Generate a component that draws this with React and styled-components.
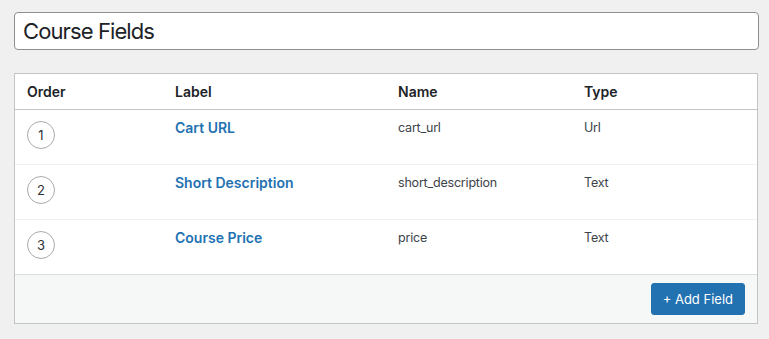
import styled, { createGlobalStyle } from "styled-components";

const GlobalStyle = createGlobalStyle`
  html, body {
    margin: 0;
    background: #f0f0f1;
    font-family: Inter, "Liberation Sans", sans-serif;
    color: #3c434a;
  }
`;

const Page = styled.div`
  padding: 12px 10px 0 14px;
  display: flex;
  flex-direction: column;
  gap: 23px;
`;

const TitleInput = styled.input`
  box-sizing: border-box;
  width: 100%;
  height: 38px;
  padding: 0 8px;
  border: 1px solid #8c8f94;
  border-radius: 4px;
  background: #fff;
  font-family: inherit;
  font-size: 22px;
  letter-spacing: -0.9px;
  color: #1d2327;
  outline: none;
`;

const Panel = styled.div`
  width: 742px;
  border: 1px solid #c3c4c7;
  background: #fff;
`;

const cols = "148px 223px 186px 1fr";

const HeadRow = styled.div`
  display: grid;
  grid-template-columns: ${cols};
  height: 35px;
  align-items: center;
  border-bottom: 1px solid #c3c4c7;
`;

const HeadCell = styled.div`
  padding-left: 12px;
  font-size: 14px;
  font-weight: 600;
  color: #1d2327;
`;

const Row = styled.div`
  display: grid;
  grid-template-columns: ${cols};
  height: 54px;
  border-bottom: 1px solid ${(p) => (p.$last ? "#dcdcde" : "#f0f0f1")};
`;

const Cell = styled.div`
  padding: 8px 0 0 12px;
  font-size: 12.5px;
  letter-spacing: -0.2px;
  line-height: 20px;
`;

const OrderBadge = styled.span`
  display: flex;
  align-items: center;
  justify-content: center;
  box-sizing: border-box;
  width: 28px;
  height: 28px;
  margin-top: 3px;
  border: 1px solid #a7aaad;
  border-radius: 50%;
  font-size: 13px;
  letter-spacing: 0;
  color: #2c3338;
`;

const LabelLink = styled.a`
  font-size: 14px;
  font-weight: 600;
  letter-spacing: 0;
  color: #2271b1;
  text-decoration: none;
`;

const Footer = styled.div`
  display: flex;
  justify-content: flex-end;
  padding: 8px 12px 8px;
  background: #f6f7f7;
`;

const AddButton = styled.button`
  height: 32px;
  padding: 0 11px;
  border: 1px solid #2271b1;
  border-radius: 3px;
  background: #2271b1;
  color: #fff;
  font-family: inherit;
  font-size: 13px;
  cursor: pointer;
`;

const fields = [
  { label: "Cart URL", name: "cart_url", type: "Url" },
  { label: "Short Description", name: "short_description", type: "Text" },
  { label: "Course Price", name: "price", type: "Text" },
];

export default function App() {
  return (
    <>
      <GlobalStyle />
      <Page>
        <TitleInput defaultValue="Course Fields" />
        <Panel>
          <HeadRow>
            <HeadCell>Order</HeadCell>
            <HeadCell>Label</HeadCell>
            <HeadCell>Name</HeadCell>
            <HeadCell>Type</HeadCell>
          </HeadRow>
          {fields.map((f, i) => (
            <Row key={f.name} $last={i === fields.length - 1}>
              <Cell>
                <OrderBadge>{i + 1}</OrderBadge>
              </Cell>
              <Cell>
                <LabelLink href="#">{f.label}</LabelLink>
              </Cell>
              <Cell>{f.name}</Cell>
              <Cell>{f.type}</Cell>
            </Row>
          ))}
          <Footer>
            <AddButton>+ Add Field</AddButton>
          </Footer>
        </Panel>
      </Page>
    </>
  );
}
